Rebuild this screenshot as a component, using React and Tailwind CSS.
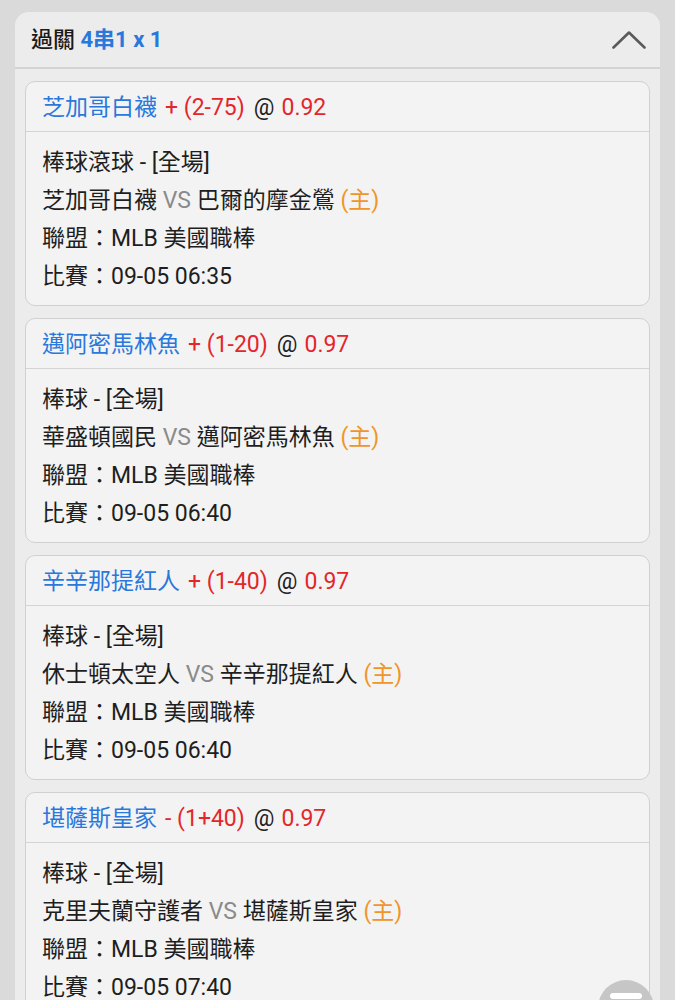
import React from "react";

const bets = [
  {
    team: "芝加哥白襪",
    sign: "+",
    line: "(2-75)",
    odds: "0.92",
    type: "棒球滾球 - [全場]",
    away: "芝加哥白襪",
    home: "巴爾的摩金鶯",
    league: "MLB 美國職棒",
    time: "09-05 06:35",
  },
  {
    team: "邁阿密馬林魚",
    sign: "+",
    line: "(1-20)",
    odds: "0.97",
    type: "棒球 - [全場]",
    away: "華盛頓國民",
    home: "邁阿密馬林魚",
    league: "MLB 美國職棒",
    time: "09-05 06:40",
  },
  {
    team: "辛辛那提紅人",
    sign: "+",
    line: "(1-40)",
    odds: "0.97",
    type: "棒球 - [全場]",
    away: "休士頓太空人",
    home: "辛辛那提紅人",
    league: "MLB 美國職棒",
    time: "09-05 06:40",
  },
  {
    team: "堪薩斯皇家",
    sign: "-",
    line: "(1+40)",
    odds: "0.97",
    type: "棒球 - [全場]",
    away: "克里夫蘭守護者",
    home: "堪薩斯皇家",
    league: "MLB 美國職棒",
    time: "09-05 07:40",
  },
];

const BetCard = ({ bet }) => {
  return (
    <div className="h-[225px] rounded-[10px] border-[1.5px] border-[#d0d0d0] bg-[#f3f3f3]">
      <div className="flex h-[50px] items-center border-b-[1.5px] border-[#d4d4d4] pl-[16px] pt-[4px] text-[23px]">
        <span className="text-[#2a78dc]">{bet.team}</span>
        <span className="ml-[8px] text-[#e3262b]">
          {bet.sign} {bet.line}
        </span>
        <span className="ml-[9px] text-[#222]">@</span>
        <span className="ml-[7px] text-[#e3262b]">{bet.odds}</span>
      </div>
      <div className="px-[16px] pt-[12px] text-[23px] leading-[38px] text-[#1e1e1e]">
        <div>{bet.type}</div>
        <div>
          {bet.away} <span className="text-[#8a8a8a]">VS</span> {bet.home}{" "}
          <span className="text-[#f0952a]">(主)</span>
        </div>
        <div>聯盟：{bet.league}</div>
        <div>比賽：{bet.time}</div>
      </div>
    </div>
  );
};

export default function App() {
  return (
    <div
      className="min-h-screen bg-[#dadada] px-[15px] pt-[12px]"
      style={{ fontFamily: 'Roboto, "Noto Sans CJK TC", sans-serif' }}
    >
      <div className="rounded-t-[14px] bg-[#ececec]">
        <div className="flex h-[57px] items-center justify-between border-b-2 border-[#d3d3d3] pl-[16px] pr-[14px]">
          <div className="text-[22px] text-[#1a1a1a]">
            <span className="font-medium">過關</span>{" "}
            <span className="font-bold text-[#2a78dc]">4串1 x 1</span>
          </div>
          <svg width="34" height="20" viewBox="0 0 34 20" fill="none">
            <path
              d="M1.5 17.5 L17 2.5 L32.5 17.5"
              stroke="#5a5a5a"
              strokeWidth="2.6"
              strokeLinecap="round"
              strokeLinejoin="round"
            />
          </svg>
        </div>
        <div className="flex flex-col gap-[12px] px-[10px] pt-[12px] pb-[12px]">
          {bets.map((b, i) => (
            <BetCard key={i} bet={b} />
          ))}
        </div>
      </div>
      <button className="fixed left-[598px] top-[980px] flex h-[56px] w-[56px] justify-center rounded-full bg-[#c6c6c6] pt-[13px]">
        <span className="h-[6px] w-[32px] rounded-full bg-white" />
      </button>
    </div>
  );
}
